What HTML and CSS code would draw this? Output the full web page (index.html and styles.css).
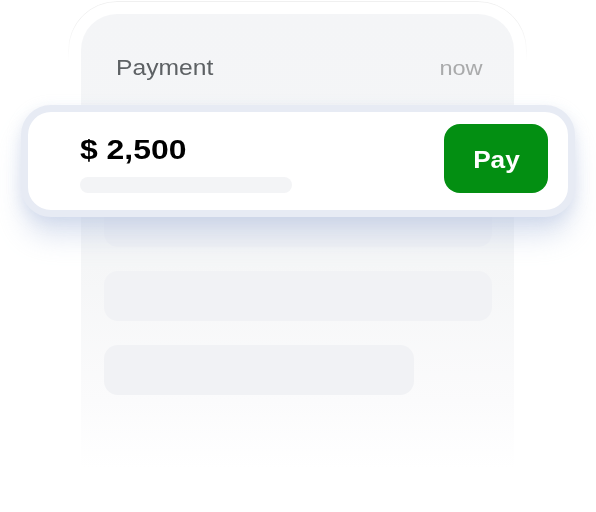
FILE: index.html
```html
<!DOCTYPE html>
<html>
<head>
<meta charset="utf-8">
<link rel="stylesheet" href="styles.css">
</head>
<body>
<div class="stage">
  <div class="ring">
    <div class="phone">
      <div class="phone-header">
        <span class="title">Payment</span>
        <span class="time">now</span>
      </div>
      <div class="bars">
        <div class="bar"></div>
        <div class="bar"></div>
        <div class="bar short"></div>
      </div>
    </div>
  </div>
  <div class="pay-card">
    <div class="pay-info">
      <div class="amount"><span class="wide">$ 2,500</span></div>
      <div class="sub-bar"></div>
    </div>
    <div class="pay-btn"><span class="wide mid">Pay</span></div>
  </div>
</div>
</body>
</html>
```

FILE: styles.css
```css
* { box-sizing: border-box; }
html, body { margin: 0; padding: 0; background: #ffffff; }
body { font-family: "Liberation Sans", Arial, sans-serif; }

.stage {
  position: relative;
  width: 596px;
  height: 512px;
  overflow: hidden;
}

.wide {
  display: inline-block;
  transform: scaleX(1.14);
  transform-origin: left center;
}
.wide.mid { transform-origin: center center; }

.ring {
  position: relative;
  width: 459px;
  margin-left: 68px;
  margin-top: 1px;
  padding: 13px 13px 0 13px;
  border-radius: 49px;
}
.ring::before {
  content: "";
  position: absolute;
  inset: 0;
  border-radius: 49px;
  border: 1px solid rgba(0, 0, 0, 0.06);
  -webkit-mask-image: linear-gradient(#000 0, #000 20px, transparent 60px);
  mask-image: linear-gradient(#000 0, #000 20px, transparent 60px);
}

.phone {
  width: 433px;
  border-radius: 36px 36px 0 0;
  background: linear-gradient(#f4f5f7 0, #f5f6f7 55%, #fbfbfc 85%, #ffffff 100%);
  padding: 0 22px 74px 23px;
}

.phone-header {
  display: flex;
  justify-content: space-between;
  align-items: baseline;
  padding: 41px 9px 0 12px;
  height: 183px;
}
.title {
  display: inline-block;
  font-size: 22px;
  color: #5d6164;
  transform: scaleX(1.12);
  transform-origin: left center;
}
.time {
  display: inline-block;
  font-size: 21px;
  color: #a9aaab;
  transform: scaleX(1.12);
  transform-origin: right center;
}

.bars {
  display: flex;
  flex-direction: column;
  gap: 24px;
}
.bar {
  width: 388px;
  height: 50px;
  border-radius: 14px;
  background: #f1f2f5;
}
.bar.short { width: 310px; }

.pay-card {
  position: absolute;
  left: 21px;
  top: 105px;
  width: 554px;
  height: 112px;
  border: 7px solid #e7ebf4;
  border-radius: 30px;
  background: #ffffff;
  display: flex;
  align-items: center;
  justify-content: space-between;
  padding: 0 20px 0 52px;
  box-shadow: 0 22px 28px -4px rgba(175, 190, 222, 0.45), 0 4px 14px rgba(190, 200, 225, 0.35);
}
.pay-info {
  display: flex;
  flex-direction: column;
  margin-top: 6px;
}
.amount {
  font-size: 28px;
  line-height: 28px;
  font-weight: 700;
  color: #000;
}
.sub-bar {
  margin-top: 13px;
  width: 212px;
  height: 16px;
  border-radius: 8px;
  background: #f3f4f6;
}
.pay-btn {
  width: 104px;
  height: 69px;
  margin-top: -5px;
  border-radius: 16px;
  background: #038f12;
  color: #ffffff;
  font-size: 23px;
  font-weight: 700;
  display: flex;
  align-items: center;
  justify-content: center;
  padding-top: 3px;
}
```
